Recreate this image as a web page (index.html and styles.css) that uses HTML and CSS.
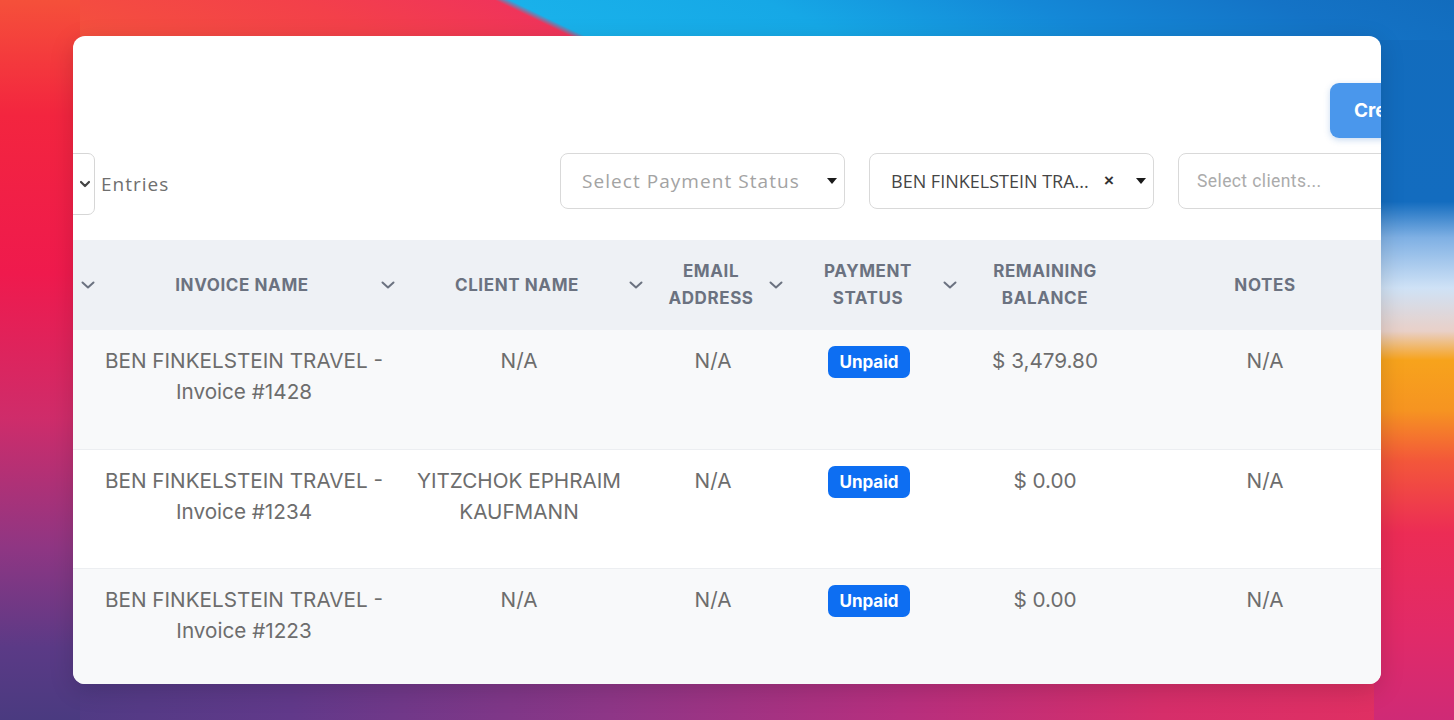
FILE: index.html
```html
<!DOCTYPE html>
<html lang="en">
<head>
  <meta charset="UTF-8">
  <meta name="viewport" content="width=device-width, initial-scale=1.0">
  <title>Invoices</title>
  <link rel="stylesheet" href="styles.css">
</head>
<body>
<div class="window">
  <!-- top actions -->
  <div class="toolbar">
    <button class="btn-create">Create Invoice</button>
  </div>

  <!-- page size + filters -->
  <div class="filter-row">
    <div class="entries">
      <div class="entries-select">
        <span>10</span>
        <svg width="12" height="8" viewBox="0 0 12 8"><path d="M2 2l4 4 4-4" fill="none" stroke="#444" stroke-width="2.2" stroke-linecap="round" stroke-linejoin="round"/></svg>
      </div>
      <span class="entries-label">Entries</span>
    </div>
    <div class="filters">
      <div class="select">
        <span class="placeholder">Select Payment Status</span>
        <span class="caret"></span>
      </div>
      <div class="select">
        <span class="value">BEN FINKELSTEIN TRA...</span>
        <span class="clear">&times;</span>
        <span class="caret"></span>
      </div>
      <div class="select select-clients">
        <span class="placeholder-sm">Select clients...</span>
      </div>
    </div>
  </div>

  <!-- invoice table -->
  <table class="invoices">
    <colgroup>
      <col style="width:27px">
      <col style="width:302px">
      <col style="width:248px">
      <col style="width:140px">
      <col style="width:172px">
      <col style="width:166px">
      <col style="width:274px">
    </colgroup>
    <thead>
      <tr>
        <th><div class="th-inner th-first"><svg class="sort" width="14" height="8" viewBox="0 0 14 8"><path d="M1.5 1.5l5.5 5 5.5-5" fill="none" stroke="#6b7280" stroke-width="2" stroke-linecap="round" stroke-linejoin="round"/></svg></div></th>
        <th><div class="th-inner"><span class="label">Invoice Name</span><svg class="sort" width="14" height="8" viewBox="0 0 14 8"><path d="M1.5 1.5l5.5 5 5.5-5" fill="none" stroke="#6b7280" stroke-width="2" stroke-linecap="round" stroke-linejoin="round"/></svg></div></th>
        <th><div class="th-inner"><span class="label">Client Name</span><svg class="sort" width="14" height="8" viewBox="0 0 14 8"><path d="M1.5 1.5l5.5 5 5.5-5" fill="none" stroke="#6b7280" stroke-width="2" stroke-linecap="round" stroke-linejoin="round"/></svg></div></th>
        <th><div class="th-inner"><span class="label">Email<br>Address</span><svg class="sort" width="14" height="8" viewBox="0 0 14 8"><path d="M1.5 1.5l5.5 5 5.5-5" fill="none" stroke="#6b7280" stroke-width="2" stroke-linecap="round" stroke-linejoin="round"/></svg></div></th>
        <th><div class="th-inner th-status"><span class="label">Payment<br>Status</span><svg class="sort" width="14" height="8" viewBox="0 0 14 8"><path d="M1.5 1.5l5.5 5 5.5-5" fill="none" stroke="#6b7280" stroke-width="2" stroke-linecap="round" stroke-linejoin="round"/></svg></div></th>
        <th><div class="th-inner th-plain"><span class="label">Remaining<br>Balance</span></div></th>
        <th><div class="th-inner th-plain"><span class="label">Notes</span></div></th>
      </tr>
    </thead>
    <tbody>
      <tr>
        <td></td>
        <td>BEN FINKELSTEIN TRAVEL -<br>Invoice #1428</td>
        <td>N/A</td>
        <td>N/A</td>
        <td><span class="badge">Unpaid</span></td>
        <td class="plain">$ 3,479.80</td>
        <td class="plain">N/A</td>
      </tr>
      <tr>
        <td></td>
        <td>BEN FINKELSTEIN TRAVEL -<br>Invoice #1234</td>
        <td>YITZCHOK EPHRAIM<br>KAUFMANN</td>
        <td>N/A</td>
        <td><span class="badge">Unpaid</span></td>
        <td class="plain">$ 0.00</td>
        <td class="plain">N/A</td>
      </tr>
      <tr>
        <td></td>
        <td>BEN FINKELSTEIN TRAVEL -<br>Invoice #1223</td>
        <td>N/A</td>
        <td>N/A</td>
        <td><span class="badge">Unpaid</span></td>
        <td class="plain">$ 0.00</td>
        <td class="plain">N/A</td>
      </tr>
    </tbody>
  </table>
</div>
</body>
</html>
```

FILE: styles.css
```css
/* page + wallpaper */
html, body {
  height: 100%;
}
body {
  margin: 0;
  overflow: hidden;
  font-family: 'Inter', 'Liberation Sans', sans-serif;
  background:
    /* left edge */
    linear-gradient(180deg, #f5503a 0%, #f3253f 16%, #ef1a4d 38%, #cf2c6a 58%, #8f3683 76%, #5b3a86 90%, #4a3a80 100%) left top / 80px 100% no-repeat,
    /* top strip, wave edge leaning right */
    linear-gradient(25.6deg, #f5553a 0%, #f3404a 25%, #f0345a 37.6%, #19b1ea 38.6%, #16a8e6 55%, #1488d7 72%, #1473c6 88%, #126cbd 100%) left top / 100% 40px no-repeat,
    /* right edge */
    linear-gradient(180deg, #126cbd 0%, #136cbf 28%, #7fb0e4 33%, #cfe2f6 40%, #e9d0c8 46%, #f7a31c 50%, #f69421 57%, #f3573a 64%, #ec2c55 74%, #e12a68 88%, #cf2a76 100%) right top / 80px 100% no-repeat,
    /* bottom strip */
    linear-gradient(90deg, #4a3b82 0%, #61398a 20%, #8e3687 42%, #b72f7e 62%, #d62e6a 80%, #e33060 100%) left bottom / 100% 40px no-repeat,
    #c02d6e;
}

/* card window, content scrolled sideways inside it */
.window {
  margin: 36px 73px;
  height: 648px;
  background: #fff;
  border-radius: 12px;
  overflow: hidden;
  padding-top: 47px;
  box-sizing: border-box;
  box-shadow: 0 6px 24px rgba(0,0,0,0.15);
}

.toolbar {
  width: 1420px;
  display: flex;
  justify-content: flex-end;
}
.btn-create {
  width: 163px;
  height: 55px;
  border: none;
  border-radius: 9px;
  background: #4a97ec;
  color: #fff;
  font-family: 'Inter', 'Liberation Sans', sans-serif;
  font-size: 19px;
  font-weight: 700;
  text-align: left;
  padding-left: 24px;
  white-space: nowrap;
  box-shadow: 0 2px 6px rgba(40,110,200,0.25);
}

/* filters */
.filter-row {
  width: 1380px;
  display: flex;
  align-items: flex-start;
  margin-top: 15px;
  margin-bottom: 25px;
}
.entries {
  display: flex;
  align-items: center;
}
.entries-select {
  width: 60px;
  height: 62px;
  margin-left: -38px;
  box-sizing: border-box;
  border: 1px solid #d6d6d6;
  border-radius: 7px;
  display: flex;
  align-items: center;
  justify-content: space-between;
  padding: 0 3px 0 10px;
  font-family: 'Open Sans', sans-serif;
  font-size: 17px;
  color: #555;
}
.entries-label {
  margin-left: 6px;
  font-family: 'Open Sans', sans-serif;
  font-size: 19px;
  letter-spacing: 1px;
  color: #6f6f6f;
}
.filters {
  margin-left: auto;
  display: flex;
  gap: 24px;
}
.select {
  width: 285px;
  height: 56px;
  box-sizing: border-box;
  border: 1px solid #d9d9d9;
  border-radius: 8px;
  display: flex;
  align-items: center;
  padding: 0 7px 0 21px;
  font-family: 'Open Sans', sans-serif;
  font-size: 18px;
}
.placeholder {
  flex: 1;
  color: #a3a3a3;
  font-size: 19px;
  letter-spacing: 1.05px;
}
.value {
  flex: 1;
  color: #454545;
  white-space: nowrap;
}
.clear {
  font-family: 'Liberation Sans', sans-serif;
  font-weight: 700;
  font-size: 17px;
  color: #333;
  margin-right: 22px;
}
.caret {
  width: 0;
  height: 0;
  border-left: 5.5px solid transparent;
  border-right: 5.5px solid transparent;
  border-top: 6.5px solid #1a1a1a;
}
.select-clients {
  width: 275px;
  padding-left: 18px;
}
.placeholder-sm {
  font-family: 'Roboto', sans-serif;
  font-size: 17.5px;
  color: #ababab;
  letter-spacing: 0.4px;
}

/* table */
.invoices {
  table-layout: fixed;
  width: 1329px;
  border-collapse: collapse;
  font-family: 'Inter', 'Liberation Sans', sans-serif;
}
.invoices th {
  background: #eef1f5;
  height: 90px;
  padding: 0;
  vertical-align: middle;
}
.th-inner {
  display: flex;
  align-items: center;
  padding-left: 3px;
  padding-right: 7px;
}
.th-first {
  justify-content: flex-end;
  padding-right: 5px;
}
.th-status {
  padding-right: 5px;
}
.th-plain {
  padding: 0;
}
.label {
  flex: 1;
  text-align: center;
  text-transform: uppercase;
  font-size: 17px;
  font-weight: 700;
  letter-spacing: 0.6px;
  line-height: 27px;
  color: #6b7280;
}
.sort {
  flex: none;
}

.invoices td {
  height: 119px;
  box-sizing: border-box;
  padding: 15px 14px 0 0;
  vertical-align: top;
  text-align: center;
  font-size: 20.7px;
  line-height: 31px;
  color: #6d6d6d;
  border-top: 1px solid #eceef1;
}
.invoices td.plain {
  padding-right: 0;
}
.invoices tbody tr:nth-child(odd) td {
  background: #f8f9fa;
}
.invoices tbody tr:first-child td {
  border-top: none;
}

.badge {
  display: inline-block;
  margin-top: 1px;
  padding: 0 11px;
  height: 32px;
  line-height: 32px;
  border-radius: 7px;
  background: #0d6ef2;
  color: #fff;
  font-size: 17px;
  font-weight: 700;
  vertical-align: top;
}
```
